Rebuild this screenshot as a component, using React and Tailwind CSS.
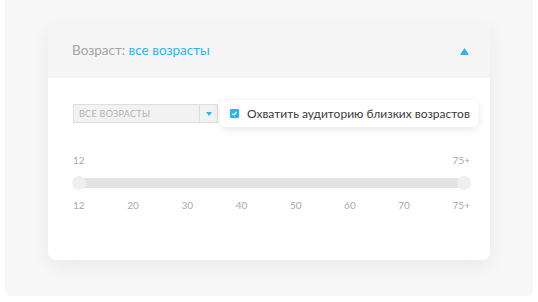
import React from "react";

const ticks = ["12", "20", "30", "40", "50", "60", "70", "75+"];

const App = () => {
  return (
    <div className="w-[538px] h-[302px] bg-white overflow-hidden font-['Lato',sans-serif]">
      {/* outer panel */}
      <div className="mx-[5px] h-[296px] bg-[#f7f7f7] rounded-b-[6px] pt-[23px] pl-[43px]">
        {/* card */}
        <div className="w-[442px] h-[237px] rounded-[8px] bg-white overflow-hidden shadow-[0_6px_20px_rgba(0,0,0,0.06)]">
          {/* header */}
          <div className="h-[55px] bg-[#f5f5f5] flex items-center justify-between pl-[24px] pr-[21px]">
            <div className="text-[13.5px] whitespace-nowrap">
              <span className="text-[#a3a3a3]">Возраст: </span>
              <span className="text-[#2bb5ee]">все возрасты</span>
            </div>
            <svg width="9" height="7" viewBox="0 0 9 7" className="mt-[1px]">
              <path d="M4.5 1 L8 6.3 L1 6.3 Z" fill="#2bb5ee" strokeLinejoin="round" stroke="#2bb5ee" strokeWidth="1.2" />
            </svg>
          </div>

          {/* body */}
          <div className="pl-[25px] pr-[20px] pt-[22px]">
            <div className="flex items-center">
              {/* select */}
              <div className="shrink-0 flex w-[145px] h-[19px] border border-[#dedede] bg-[#f2f2f2]">
                <div className="flex-1 flex items-center pl-[5px] text-[9px] text-[#b3b3b3] tracking-[0.3px] whitespace-nowrap">
                  ВСЕ ВОЗРАСТЫ
                </div>
                <div className="w-[18px] border-l border-[#dedede] flex items-center justify-center">
                  <svg width="6" height="4" viewBox="0 0 6 4">
                    <path d="M0 0 L6 0 L3 4 Z" fill="#2bb5ee" />
                  </svg>
                </div>
              </div>
              {/* checkbox */}
              <div className="shrink-0 ml-[2px] h-[27px] w-[258px] flex items-center bg-white rounded-[5px] shadow-[0_2px_8px_rgba(0,0,0,0.1)] pl-[10px]">
                <span className="w-[9px] h-[9px] rounded-[1px] bg-[#2bb5ee] flex items-center justify-center">
                  <svg width="7" height="7" viewBox="0 0 7 7">
                    <path d="M1.3 3.6 L2.9 5 L5.7 1.8" fill="none" stroke="white" strokeWidth="1.2" />
                  </svg>
                </span>
                <span className="ml-[8px] text-[12px] text-[#3a3a3a] whitespace-nowrap">
                  Охватить аудиторию близких возрастов
                </span>
              </div>
            </div>

            {/* slider */}
            <div className="mt-[26px] w-[397px]">
              <div className="flex justify-between text-[10px] text-[#a8a8a8]">
                <span>12</span>
                <span>75+</span>
              </div>
              <div className="relative mt-[10px] h-[10px] rounded-full bg-[#e3e3e3]">
                <span className="absolute left-[-1px] top-[-2px] w-[14px] h-[14px] rounded-full bg-[#efefef]" />
                <span className="absolute right-[-1px] top-[-2px] w-[14px] h-[14px] rounded-full bg-[#efefef]" />
              </div>
              <div className="mt-[10px] flex justify-between text-[10px] text-[#a8a8a8]">
                {ticks.map((t) => (
                  <span key={t}>{t}</span>
                ))}
              </div>
            </div>
          </div>
        </div>
      </div>
    </div>
  );
};

export default App;
